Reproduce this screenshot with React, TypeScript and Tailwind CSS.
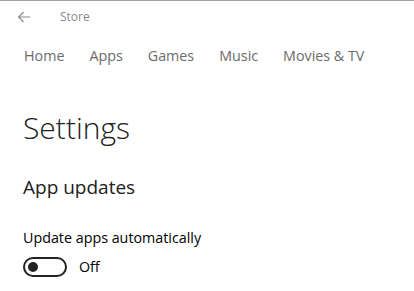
import React from "react";

const font = { fontFamily: '"Segoe UI", "Open Sans", "Noto Sans", sans-serif' };

export default function App() {
  const tabs = ["Home", "Apps", "Games", "Music", "Movies & TV"];

  return (
    <div className="w-[414px] h-[291px] bg-white border-t border-[#a0a0a0] overflow-hidden" style={font}>
      <div className="h-[31px] flex items-center">
        <div className="w-[48px] flex justify-center text-[#8a8a8a]">
          <svg width="14" height="12" viewBox="0 0 14 12" fill="none" stroke="currentColor" strokeWidth="1.1">
            <path d="M13 6H1.5M6.5 1L1.5 6l5 5" />
          </svg>
        </div>
        <span className="ml-[12px] text-[12px] text-[#8a8a8a]">Store</span>
      </div>

      <nav className="flex gap-[25px] pl-[24px] pt-[13px] text-[14.3px] text-[#6b6b6b]">
        {tabs.map((t) => (
          <span key={t}>{t}</span>
        ))}
      </nav>

      <div className="pl-[23px]">
        <h1 className="mt-[42px] text-[30px] font-light text-[#202020] leading-[40px]">Settings</h1>
        <h2 className="mt-[26px] text-[19px] text-[#202020] leading-[26px]">App updates</h2>
        <p className="mt-[28px] text-[14.3px] text-black leading-[20px]">Update apps automatically</p>
        <div className="mt-[8px] flex items-center">
          <div className="w-[44px] h-[20px] rounded-full border-2 border-[#222] flex items-center px-[3px]">
            <div className="w-[10px] h-[10px] rounded-full bg-[#222]" />
          </div>
          <span className="ml-[12px] text-[14.3px] text-black">Off</span>
        </div>
      </div>
    </div>
  );
}
